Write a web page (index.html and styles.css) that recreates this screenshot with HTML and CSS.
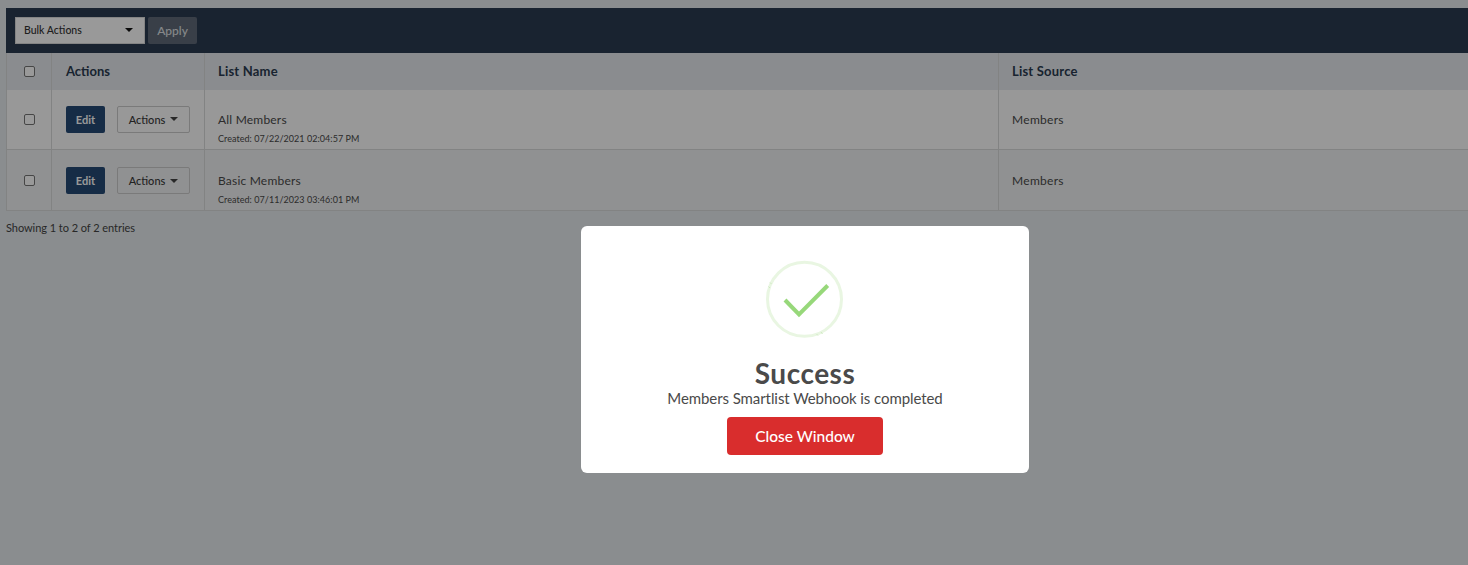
FILE: index.html
```html
<!DOCTYPE html>
<html lang="en">
<head>
<meta charset="utf-8">
<title>Smartlists</title>
<link rel="stylesheet" href="styles.css">
</head>
<body>
<main class="page">
  <div class="toolbar">
    <div class="bulk"><span>Bulk Actions</span><i class="caret caret-dark"></i></div>
    <button class="apply">Apply</button>
  </div>
  <table class="list">
    <colgroup>
      <col class="c-check"><col class="c-actions"><col class="c-name"><col>
    </colgroup>
    <thead>
      <tr>
        <th class="check"><span class="box"></span></th>
        <th class="act">Actions</th>
        <th>List Name</th>
        <th>List Source</th>
      </tr>
    </thead>
    <tbody>
      <tr class="odd">
        <td class="check"><span class="box"></span></td>
        <td class="act"><div class="btns"><span class="edit">Edit</span><span class="more">Actions<i class="caret"></i></span></div></td>
        <td class="name"><div>All Members</div><small>Created: 07/22/2021 02:04:57 PM</small></td>
        <td>Members</td>
      </tr>
      <tr class="even">
        <td class="check"><span class="box"></span></td>
        <td class="act"><div class="btns"><span class="edit">Edit</span><span class="more">Actions<i class="caret"></i></span></div></td>
        <td class="name"><div>Basic Members</div><small>Created: 07/11/2023 03:46:01 PM</small></td>
        <td>Members</td>
      </tr>
    </tbody>
  </table>
  <p class="info">Showing 1 to 2 of 2 entries</p>
</main>
<div class="overlay">
  <div class="modal">
    <svg class="tick" width="79" height="79" viewBox="0 0 79 79" aria-hidden="true">
      <circle cx="39.500" cy="39.300" r="37" fill="none" stroke="#e9f6e2" stroke-width="3"/>
      <path d="M5 22.500 L6.500 24 M3.500 26.500 L5 28 M56 72 L57.500 74 M51.500 74 L53 75.500" fill="none" stroke="#cfeac2" stroke-width="1"/>
      <path d="M20 40 L34 54.500 L62.700 25.500" fill="none" stroke="#97d87a" stroke-width="4"/>
    </svg>
    <h2>Success</h2>
    <p>Members Smartlist Webhook is completed</p>
    <button class="close">Close Window</button>
  </div>
</div>
</body>
</html>
```
FILE: styles.css
```css
* { box-sizing: border-box; }
html, body { height: 100%; }
body {
  margin: 0;
  background: #e6ebee;
  color: #4a4a4a;
  font-family: "Lato", "Noto Sans", sans-serif;
  font-size: 12px;
  overflow: hidden;
}
.page { padding: 8px 0 0 6px; }
.toolbar {
  height: 45px;
  background: #2b3b50;
  display: flex;
  align-items: center;
  gap: 3px;
  padding: 0 0 1px 9px;
}
.bulk {
  width: 130px;
  height: 27px;
  background: #fff;
  border: 1px solid #ddd;
  color: #333;
  font-size: 10.500px;
  font-weight: 500;
  display: flex;
  align-items: center;
  justify-content: space-between;
  padding: 0 11px 0 8px;
}
.caret {
  display: inline-block;
  width: 0;
  height: 0;
  border-left: 4px solid transparent;
  border-right: 4px solid transparent;
  border-top: 4px solid #444;
}
.caret-dark { border-top-color: #111; }
.apply {
  width: 49px;
  height: 27px;
  background: #606a79;
  border: 0;
  border-radius: 2px;
  color: #dfe1e4;
  font: 500 12px "Lato", sans-serif;
  padding: 0;
}
.list {
  width: 100%;
  table-layout: fixed;
  border-collapse: collapse;
  border-left: 1px solid #d9dadb;
}
.c-check { width: 45px; }
.c-actions { width: 153px; }
.c-name { width: 794px; }
.list th, .list td {
  border-left: 1px solid #d9dadb;
  padding: 0 0 0 13px;
  text-align: left;
  vertical-align: middle;
}
.list th:first-child, .list td:first-child { border-left: 0; }
.list th {
  height: 37px;
  padding-bottom: 2px;
  background: #e6eaee;
  color: #2b3b50;
  font-size: 13px;
  font-weight: 700;
  letter-spacing: .2px;
}
.list td { font-size: 12px; letter-spacing: .3px; border-bottom: 1px solid #d9dadb; }
.odd td { height: 59px; background: #fdfdfd; }
.even td { height: 61px; padding-top: 2px; background: #f1f2f3; }
.list .act { padding-left: 14px; letter-spacing: 0; }
.list .check { padding-left: 0; padding-right: 0; }
.list th.check { padding-bottom: 0; }
.box {
  display: block;
  width: 11px;
  height: 11px;
  margin: 0 auto 1px;
  border: 1px solid #767676;
  border-radius: 2px;
  background: #fff;
}
.list td .box { margin-bottom: 0; }
.btns { display: flex; align-items: center; gap: 12px; }
.edit {
  width: 39px;
  height: 27px;
  background: #254a75;
  border-radius: 2px;
  color: #fff;
  font-size: 11px;
  font-weight: 700;
  display: flex;
  align-items: center;
  justify-content: center;
}
.more {
  width: 73px;
  height: 27px;
  border: 1px solid #ccc;
  border-radius: 2px;
  font-size: 11px;
  font-weight: 500;
  color: #3a3a3a;
  display: flex;
  align-items: center;
  justify-content: center;
  gap: 5px;
}
.list .name { padding-top: 19px; letter-spacing: .2px; }
.name div { margin-bottom: 4px; line-height: 16px; }
.name small { display: block; font-size: 9px; line-height: 13px; letter-spacing: .05px; color: #4a4a4a; }
.info { margin: 10px 0 0; font-size: 11px; letter-spacing: -.05px; line-height: 14px; color: #444; }
.overlay {
  position: fixed;
  inset: 0;
  background: rgba(0, 0, 0, .4);
}
.modal {
  position: absolute;
  left: 581px;
  top: 226px;
  width: 448px;
  height: 247px;
  background: #fff;
  border-radius: 6px;
  display: flex;
  flex-direction: column;
  align-items: center;
  padding-top: 34px;
  text-align: center;
}
.tick { display: block; margin-right: 1px; }
h2 {
  margin: 18px 0 0;
  font-size: 28px;
  line-height: 32px;
  font-weight: 700;
  letter-spacing: .5px;
  color: #4a4a4a;
}
.modal p {
  margin: -1px 0 0;
  font-size: 15px;
  line-height: 20px;
  letter-spacing: -.08px;
  color: #4a4a4a;
}
.close {
  margin-top: 9px;
  width: 156px;
  height: 38px;
  border: 0;
  border-radius: 4px;
  background: #d92d2d;
  color: #fff;
  font: 500 15.500px "Lato", sans-serif;
}
```
